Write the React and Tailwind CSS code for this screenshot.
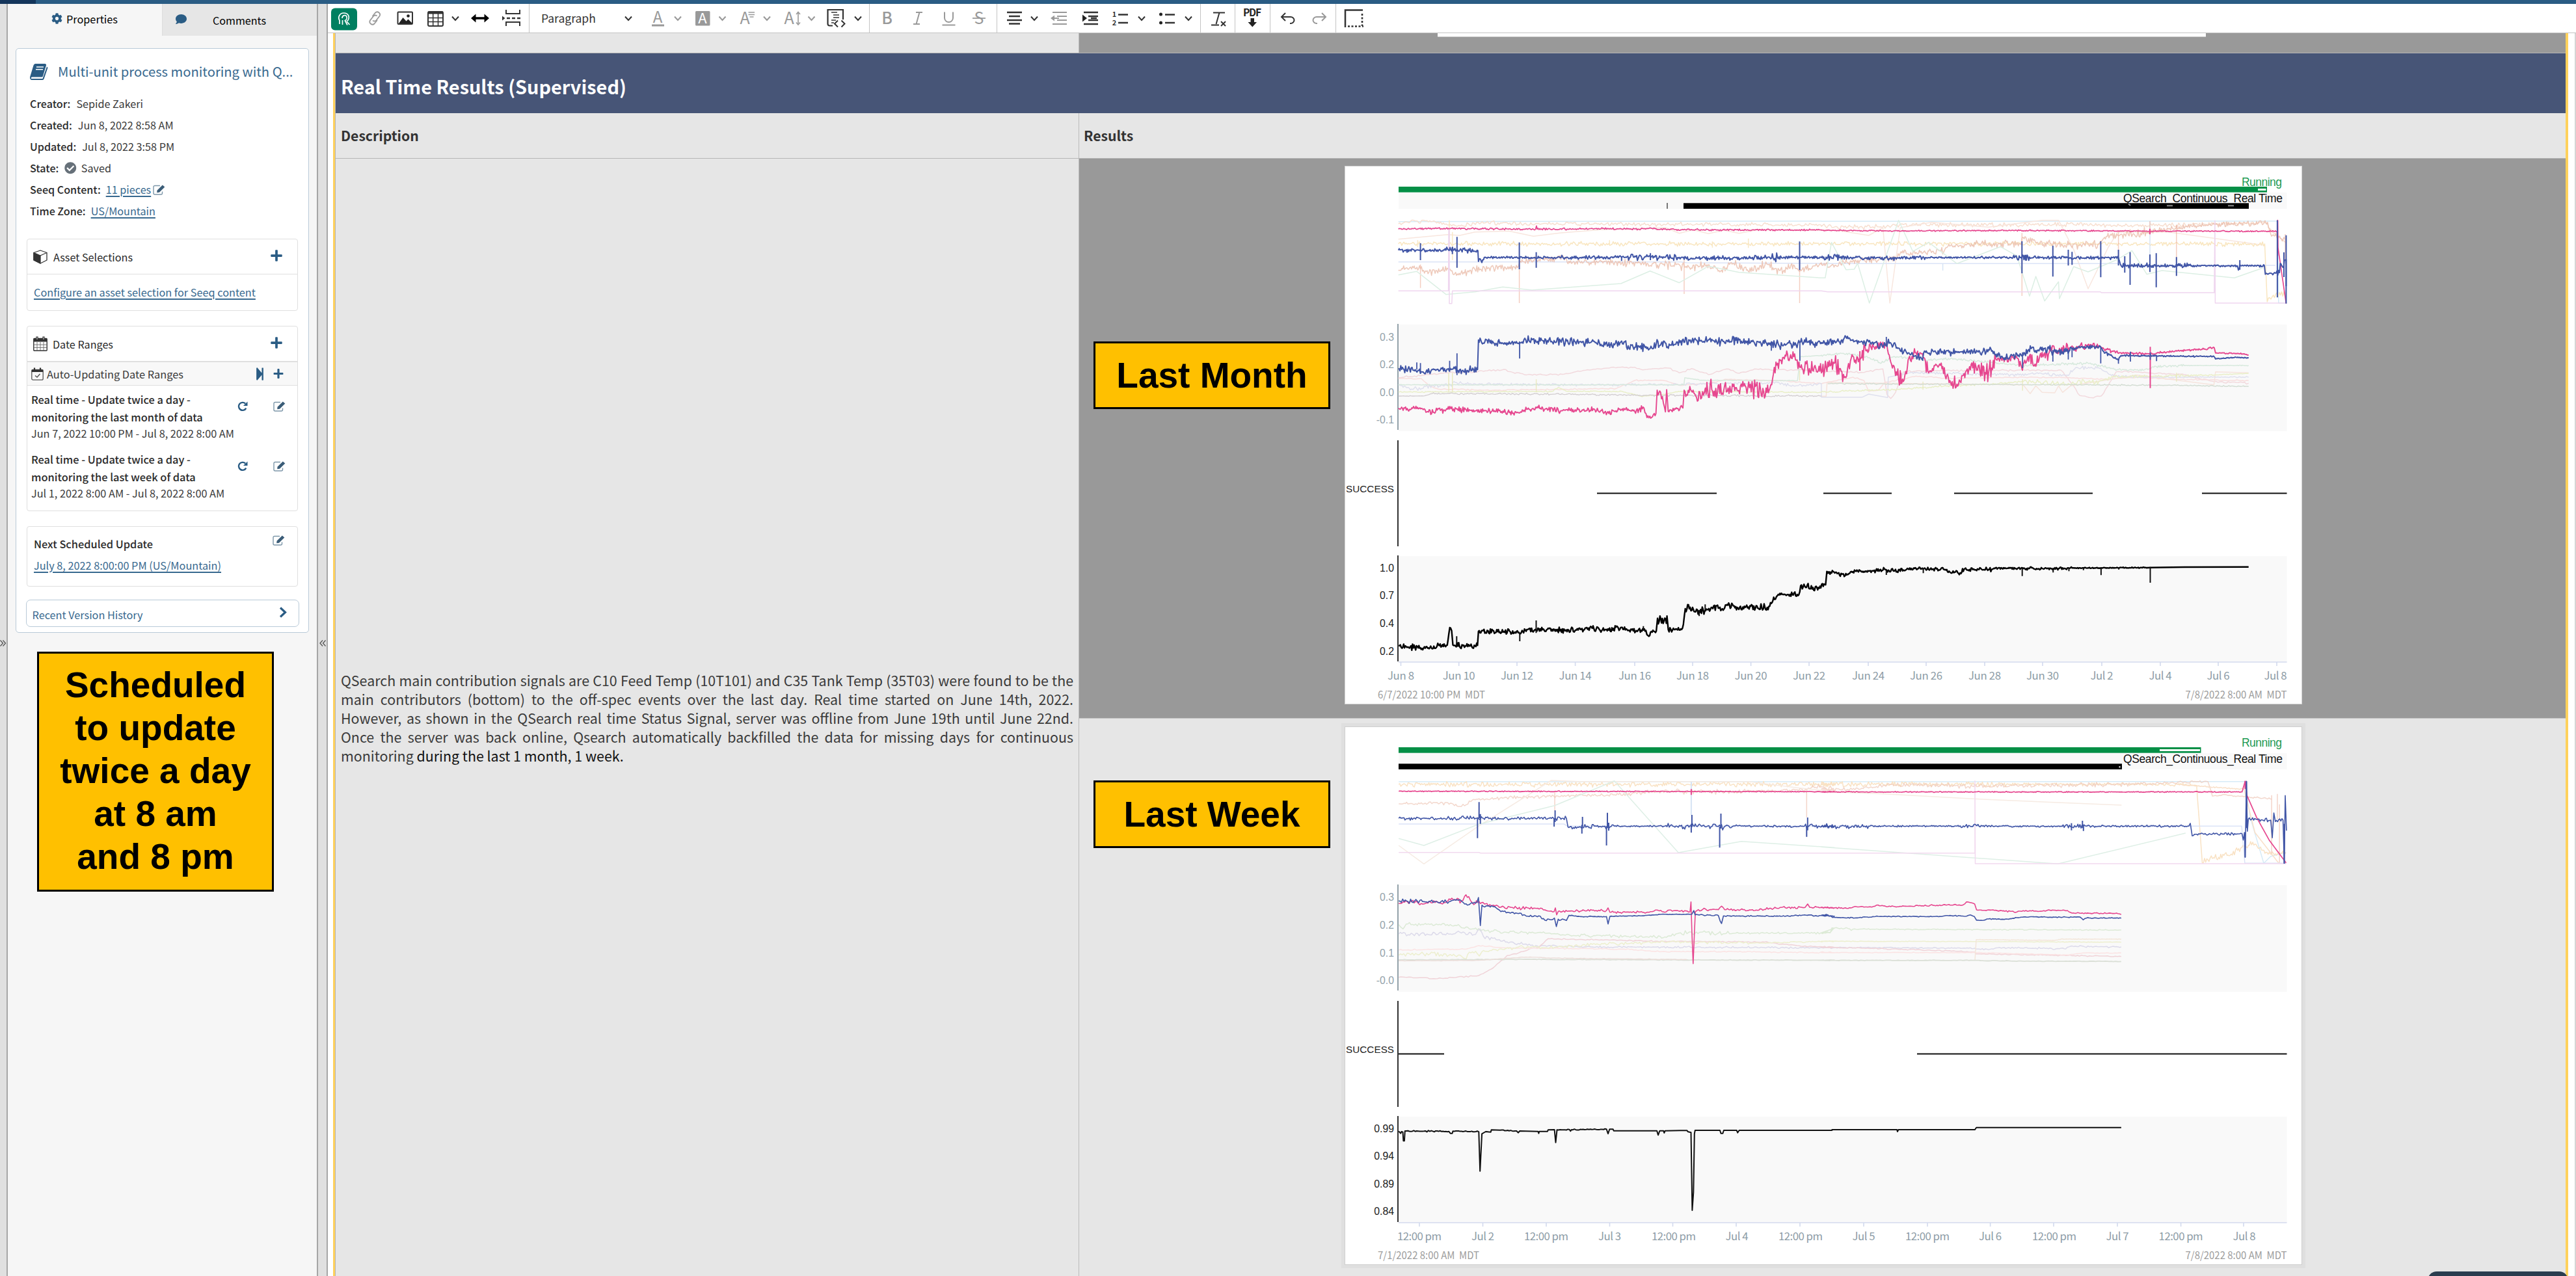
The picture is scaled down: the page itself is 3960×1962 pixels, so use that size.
import React from "react";
import { FaCog, FaComment, FaCheckCircle, FaPlus, FaStepForward } from "react-icons/fa";

/* ---------- trend chart helpers ---------- */

// Each pane maps its own plotting units to chart units: [originX, originY, unitsPerX, unitsPerY].
const PANES = {
  A1: [2060, 240, 2.119, 3],
  B1: [2800, 240, 2.0632, 3],
  C1: [2060, 660, 2.0632, 3],
  D1: [2800, 660, 2.0632, 3],
  A2: [2060, 1100, 2.0632, 3],
  B2: [2800, 1100, 2.0632, 3],
  C2: [2060, 1530, 2.0632, 3],
  D2: [2800, 1530, 1.3517, 3],
};

function rng(seed) {
  let s = seed;
  return () => {
    s = (s * 1664525 + 1013904223) % 4294967296;
    return s / 4294967296;
  };
}

function project(pane, x, y) {
  const [ox, oy, sx, sy] = PANES[pane];
  return [ox + x / sx, oy + y / sy];
}

// Points are [x, y, amplitude?]; the amplitude carries over until it is changed.
function buildPath(data, seed, step) {
  const r = rng(seed);
  const pts = [];
  let amp = 0;
  for (const [pane, list] of data) {
    for (const [x, y, a] of list) {
      if (a !== undefined) amp = a;
      const [px, py] = project(pane, x, y);
      pts.push([px, py, amp / 3]);
    }
  }
  let d = "M" + pts[0][0].toFixed(1) + " " + pts[0][1].toFixed(1);
  for (let i = 1; i < pts.length; i++) {
    const [x0, y0, a0] = pts[i - 1];
    const [x1, y1] = pts[i];
    const n = a0 > 0 ? Math.floor((x1 - x0) / step) : 0;
    for (let k = 1; k < n; k++) {
      const t = k / n;
      const e = (r() + r() - 1) * 1.75 * a0;
      d += "L" + (x0 + (x1 - x0) * t).toFixed(1) + " " + (y0 + (y1 - y0) * t + e).toFixed(1);
    }
    d += "L" + x1.toFixed(1) + " " + y1.toFixed(1);
  }
  return d;
}

function Series({ data, color, width = 1.5, opacity = 1, seed = 7, step = 1.4 }) {
  return <path d={buildPath(data, seed, step)} fill="none" stroke={color} strokeWidth={width} strokeLinejoin="round" opacity={opacity} />;
}

function Spikes({ data, color, width = 2, opacity = 1 }) {
  const d = data
    .flatMap(([pane, list]) =>
      list.map(([x, a, b]) => {
        const [px, p0] = project(pane, x, a);
        const [, p1] = project(pane, x, b);
        return `M${px.toFixed(1)} ${p0.toFixed(1)}V${p1.toFixed(1)}`;
      })
    )
    .join("");
  return <path d={d} fill="none" stroke={color} strokeWidth={width} opacity={opacity} />;
}

const BLUE = "#4055a6";
const PINK = "#e6478f";

function AxisLabels({ labels, color }) {
  return labels.map(([t, y]) => (
    <text key={t} x="2143" y={y + 5.5} textAnchor="end" fontSize="15.8" fill={color} fontFamily="Liberation Sans, sans-serif">{t}</text>
  ));
}

function ChartFrame({ top, dy, greenEnd, greenGap, blackStart, blackEnd, lane2, lane4, ticks, start, startW, end, endW, success, children }) {
  return (
    <svg viewBox={`2068 ${top} 1470 826`} width="1470" height="826" className="block bg-white">
      <g transform={`translate(0 ${dy})`}>
        <rect x="2150" y="296" width="1365.5" height="25" fill="#f9f9f9" />
        <rect x="2150" y="499" width="1365.5" height="164" fill="#f9f9f9" />
        <rect x="2150" y="855" width="1365.5" height="163" fill="#f9f9f9" />
        <rect x="2150" y="287" width={greenEnd - 2150} height="8.7" fill="#048f46" />
        <rect x={greenGap} y="290" width={greenEnd - greenGap - 1.5} height="3" fill="#ffffff" />
        <rect x={blackStart} y="312.3" width={blackEnd - blackStart} height="8.7" fill="#000" />
        <text x="3446" y="286" fontSize="17.5" textLength="62" fill="#1d9a53" fontFamily="Liberation Sans, sans-serif">Running</text>
        <text x="3264" y="311" fontSize="17.5" textLength="245" fill="#111" fontFamily="Liberation Sans, sans-serif">QSearch_Continuous_Real Time</text>
        <path d="M2149 498V661" stroke="#93a2aa" strokeWidth="2" />
        <path d="M2149 677V840M2149 854V1017" stroke="#1c1c1c" strokeWidth="1.8" />
        <path d={success} stroke="#111" strokeWidth="2" />
        <text x="2069" y="756.5" fontSize="15.2" textLength="74" fill="#222" fontFamily="Liberation Sans, sans-serif">SUCCESS</text>
        <AxisLabels labels={lane2} color="#93a2aa" />
        <AxisLabels labels={lane4} color="#222" />
        <path d={"M2150 1018H3515.5" + ticks.map((t) => `M${t[0]} 1018V1024`).join("")} stroke="#d3daee" strokeWidth="1.6" />
        {ticks.map(([x, t, w, c], i) => (
          <text key={i} x={c || x} y="1045" textAnchor="middle" fontSize="16.8" textLength={w} fill="#8d9ca6" fontFamily="Noto Sans CJK SC, sans-serif">{t}</text>
        ))}
        <text x="2118" y="1073.5" fontSize="16" textLength={startW} lengthAdjust="spacingAndGlyphs" fill="#9c9c9c" fontFamily="Noto Sans CJK SC, sans-serif">{start}</text>
        <text x="3515.5" y="1073.5" textAnchor="end" fontSize="16" textLength={endW} lengthAdjust="spacingAndGlyphs" fill="#9c9c9c" fontFamily="Noto Sans CJK SC, sans-serif">{end}</text>
      </g>
      {children}
    </svg>
  );
}

function MonthChart() {
  const ticks = [
    [2153.5, "Jun 8", 41], [2242.7, "Jun 10", 50], [2332, "Jun 12", 50], [2421.6, "Jun 14", 50], [2513, "Jun 16", 50],
    [2602, "Jun 18", 50], [2691.6, "Jun 20", 50], [2781, "Jun 22", 50], [2872, "Jun 24", 50], [2961, "Jun 26", 50],
    [3051, "Jun 28", 50], [3140, "Jun 30", 50], [3231, "Jul 2", 35], [3321, "Jul 4", 35], [3410, "Jul 6", 35], [3500, "Jul 8", 35, 3498],
  ];
  return (
    <ChartFrame
      top={256} dy={0} greenEnd={3485} greenGap={3471} blackStart={2588} blackEnd={3457}
      lane2={[["0.3", 518], ["0.2", 560], ["0.0", 603], ["-0.1", 645]]}
      lane4={[["1.0", 873.5], ["0.7", 915.5], ["0.4", 958.5], ["0.2", 1001]]}
      ticks={ticks} start={"6/7/2022 10:00 PM \u00a0MDT"} startW={165} end={"7/8/2022 8:00 AM \u00a0MDT"} endW={156}
      success="M2455 758.500H2639M2803 758.500H2908M3004 758.500H3217M3385 758.500H3515.500"
    >
      <path d="M2563 312V321" stroke="#333" strokeWidth="1.3" />
      <path d="M3331 316.300H3340M3425 316.300H3434M3272 313.500L3275 316" stroke="#9a9a9a" strokeWidth="1.8" />

      {/* signals, background */}
      <Series color="#d6ebf7" data={[["A1", [[190, 302, 0], [1568, 300]]], ["B1", [[0, 301], [1447, 300], [1450, 678], [1474, 678]]]]} />
      <Series color="#f7dfd0" seed={3} step={2} data={[["A1", [[190, 312, 6], [230, 300], [310, 302], [350, 318], [400, 322], [450, 306], [600, 312], [800, 312], [1000, 316], [1200, 314], [1568, 320]]], ["B1", [[0, 325, 7], [160, 328], [260, 316], [500, 318], [800, 316], [1040, 322], [1100, 318], [1300, 312], [1410, 308], [1430, 350, 0], [1474, 400]]]]} />
      <Series color="#f8e6de" data={[["A1", [[190, 383, 0], [350, 362], [390, 366], [440, 350], [550, 346], [630, 370], [720, 354], [850, 340], [1060, 330], [1105, 356], [1150, 340], [1200, 358], [1250, 342], [1300, 356], [1360, 340], [1568, 342]]], ["B1", [[0, 340], [60, 345], [150, 366], [195, 330], [217, 678], [250, 330], [350, 305], [530, 328], [700, 296], [752, 296], [800, 430], [846, 612], [910, 420], [940, 350], [1100, 350], [1400, 410]]]]} />
      <Series color="#f9e6c0" seed={11} step={1.7} data={[["A1", [[190, 405, 7], [1568, 404]]], ["B1", [[0, 404, 7], [1406, 405, 3], [1414, 672, 12], [1445, 630, 12], [1474, 650]]]]} />
      <Spikes color="#f9e9c6" width={1.5} data={[["A1", [[253, 388, 420], [356, 296, 400], [366, 350, 480], [878, 388, 410], [1213, 394, 422], [1330, 380, 424]]]]} />
      <Series color="#dbe3f7" data={[["A1", [[190, 488, 0], [1110, 488], [1130, 492], [1568, 495]]], ["B1", [[0, 496], [940, 496], [950, 504], [1440, 504]]]]} />
      <Spikes color="#d6e4f4" width={1.5} data={[["B1", [[385, 496, 528], [1042, 300, 460]]]]} />
      <Series color="#ebbfae" opacity={0.85} seed={5} step={1.3} data={[["A1", [[190, 528, 11], [230, 512], [262, 520], [275, 540], [330, 525], [355, 522], [368, 545], [385, 548], [440, 524], [500, 515], [580, 512], [590, 490], [640, 478], [700, 470], [725, 458], [740, 490], [920, 488, 13], [1000, 495], [1040, 505], [1100, 498, 14], [1130, 515], [1190, 505], [1240, 530], [1280, 495], [1330, 532], [1390, 498], [1430, 525], [1480, 505], [1500, 525], [1568, 500]]], ["B1", [[0, 492, 11], [40, 512], [70, 488], [240, 470], [250, 448], [300, 445], [390, 436], [410, 412], [500, 405], [630, 405, 14], [640, 375], [680, 400], [790, 410], [880, 405], [895, 380], [940, 365], [990, 358], [1030, 350, 9], [1140, 330], [1200, 320], [1415, 305], [1425, 360], [1470, 385]]]]} />
      <Spikes color="#efb9a6" width={1.5} opacity={0.7} data={[["A1", [[262, 500, 608], [584, 480, 678], [1121, 480, 636], [1497, 480, 678]]], ["B1", [[636, 355, 645], [942, 345, 470], [1042, 300, 350], [1126, 320, 480], [1471, 360, 480]]]]} />
      <Series color="#dcefe4" data={[["A1", [[190, 548, 0], [250, 532], [345, 638], [440, 626], [530, 604], [625, 618], [915, 588], [1010, 530], [1105, 584], [1200, 508], [1300, 536], [1568, 562]]], ["B1", [[0, 562], [12, 562], [32, 398], [78, 524], [104, 522], [115, 495], [152, 678], [245, 296], [290, 440], [340, 398], [430, 496], [568, 418], [620, 460], [660, 646], [680, 555], [708, 668], [752, 580], [755, 658], [800, 510], [846, 534], [940, 476], [985, 436], [1032, 545], [1080, 528], [1310, 562], [1400, 516]]]]} />
      <Series color="#efd6ef" data={[["A1", [[190, 622, 0], [353, 622], [354, 340], [356, 340], [356, 680], [364, 680], [366, 622], [1568, 622]]], ["B1", [[0, 622], [20, 626], [885, 626], [888, 630], [1246, 630], [1248, 298], [1249, 678], [1474, 678]]]]} />

      {/* signals, foreground */}
      <Series color={PINK} width={1.7} seed={21} data={[["A1", [[190, 337, 3], [300, 334], [620, 337], [637, 337], [640, 322], [642, 337], [850, 335], [995, 337], [1010, 331], [1035, 338], [1200, 340], [1568, 341]]], ["B1", [[0, 342, 2], [170, 345], [700, 343], [1040, 346], [1042, 346], [1446, 347, 0], [1447, 296], [1448, 420], [1474, 680]]]]} />
      <Spikes color={PINK} data={[["B1", [[1042, 335, 361], [1447, 296, 460]]]]} />
      <Series color={BLUE} width={2} seed={31} step={1.2} data={[["A1", [[190, 434, 6], [345, 434, 10], [390, 434, 8], [449, 436, 0], [451, 486, 10], [470, 467, 9], [485, 468, 4], [720, 468, 6], [850, 468, 5], [930, 466, 9], [1100, 468, 6], [1150, 472, 7], [1400, 468, 12], [1425, 468, 5], [1568, 468]]], ["B1", [[0, 468, 10], [60, 469, 6], [200, 469, 10], [240, 469, 6], [330, 468, 3], [500, 468, 9], [512, 468, 4], [600, 468, 9], [680, 468, 5], [942, 470, 2], [950, 504, 8], [1020, 506, 9], [1050, 505, 5], [1130, 506, 9], [1175, 506, 3], [1310, 506, 12], [1330, 506, 4], [1405, 506, 0], [1408, 545, 5], [1442, 540, 14], [1474, 478, 0], [1474, 600]]]]} />
      <Spikes color={BLUE} data={[["A1", [[262, 402, 480], [366, 420, 452], [381, 373, 515], [584, 398, 522], [639, 443, 515], [917, 466, 484], [1011, 448, 480], [1497, 394, 526]]], ["B1", [[636, 393, 541], [648, 455, 482], [734, 413, 556], [783, 432, 505], [795, 442, 502], [886, 393, 559], [942, 432, 505], [962, 462, 538], [979, 443, 594], [1042, 454, 535], [1062, 448, 605], [1126, 466, 553], [1327, 480, 524], [1446, 296, 652], [1467, 444, 558], [1474, 365, 680]]]]} />

      {/* contributions, background */}
      <Series color="#f2d9dd" seed={41} step={3} data={[["A1", [[190, 1022, 3], [340, 1000], [440, 995], [540, 985], [570, 1002], [640, 1010], [730, 1006], [800, 988], [870, 978], [920, 973], [1000, 984], [1070, 978], [1105, 1000], [1145, 980], [1200, 1008], [1260, 982], [1300, 1002], [1350, 982], [1430, 985], [1568, 992]]], ["B1", [[0, 992], [130, 998], [195, 982], [208, 1100], [220, 1118], [235, 1090], [260, 995], [330, 990], [500, 988], [760, 988], [800, 1060], [820, 1105], [850, 1114], [888, 1106], [935, 995], [1000, 996], [1150, 1008], [1245, 1040], [1355, 1048]]]]} />
      <Series color="#f8dede" seed={43} step={3} data={[["A1", [[190, 1027, 2], [265, 1027], [290, 1060], [320, 1075], [500, 1080], [900, 1072], [960, 1035], [1050, 1034], [1110, 1058], [1200, 1048], [1260, 1030], [1440, 1036], [1568, 1050]]], ["B1", [[0, 1050], [15, 1045], [100, 1020], [135, 1035], [150, 1085], [180, 1080], [200, 1045], [300, 1015], [400, 1025], [640, 1020], [780, 1022], [900, 1030], [1000, 1020], [1130, 1030], [1355, 1036]]]]} />
      <Series color="#f6e4dd" seed={44} step={3} data={[["B1", [[0, 1108, 0], [15, 1108], [18, 1045], [640, 1055], [662, 1096], [680, 1060], [700, 1090], [740, 1092], [752, 1060], [765, 1090], [790, 1060], [1000, 1010], [1245, 1055], [1250, 995], [1355, 1000]]]]} />
      <Series color="#dfe0ee" seed={45} step={1.8} data={[["A1", [[190, 1056, 4], [225, 1070, 7], [270, 1072], [300, 1056], [350, 1060, 7], [380, 1045], [420, 1052, 4], [900, 1056], [1240, 1050], [1430, 1045, 5], [1470, 1062], [1568, 1050]]], ["B1", [[0, 1112, 0], [130, 1112], [150, 1098], [210, 1114], [212, 1020], [280, 1000, 5], [520, 1004], [600, 1008], [700, 1004], [780, 1010], [810, 975], [885, 978], [920, 1012], [1000, 1020, 2], [1355, 1020]]]]} />
      <Series color="#d7e9dd" seed={46} data={[["A1", [[190, 1055, 1], [1120, 1055], [1123, 1022], [1180, 1034], [1490, 1036], [1500, 925], [1568, 920]]], ["B1", [[0, 918, 4], [80, 910], [150, 930], [190, 955], [230, 925], [330, 940], [420, 934], [560, 955], [640, 966], [850, 956], [940, 985], [1020, 988], [1060, 970], [1150, 966, 1], [1355, 966]]]]} />
      <Series color="#e9efc8" seed={47} step={1.8} data={[["A1", [[190, 1088, 2], [640, 1086], [690, 1085], [710, 1068], [740, 1085], [920, 1086], [980, 1108], [1050, 1100], [1110, 1085], [1568, 1090]]], ["B1", [[0, 1088, 3], [250, 1076], [400, 1060], [560, 1050], [640, 1040, 8], [760, 1050, 9], [880, 1040], [920, 1018, 4], [1245, 1010, 1], [1355, 1002]]]]} />
      <Spikes color="#e9e9c0" width={1.4} data={[["A1", [[354, 1000, 1088], [366, 1000, 1090], [639, 1030, 1090], [1497, 990, 1036]]], ["B1", [[322, 1040, 1078], [638, 1030, 1082], [1126, 1000, 1040]]]]} />
      <Series color="#d2cdd0" width={1.3} seed={48} step={2} data={[["A1", [[190, 1107, 1], [275, 1106], [300, 1096, 3], [740, 1098], [900, 1102], [1100, 1104], [1568, 1107]]]]} />
      <Series color="#d3ddd3" width={1.5} seed={49} step={2} data={[["B1", [[20, 1050, 2], [700, 1054], [1200, 1058], [1355, 1063]]]]} />

      {/* contributions, foreground */}
      <Series color={PINK} width={1.9} seed={51} step={1.2} data={[["A1", [[190, 1163, 9], [268, 1165], [280, 1182], [340, 1172], [358, 1155], [370, 1167], [500, 1178], [585, 1185], [600, 1172], [640, 1162], [720, 1174], [830, 1170], [870, 1183], [930, 1168], [960, 1178], [990, 1162], [1000, 1206], [1015, 1205], [1029, 1188, 6], [1033, 1080, 26], [1050, 1110, 30], [1060, 1180, 4], [1064, 1078], [1069, 1178, 8], [1090, 1165], [1117, 1162, 14], [1121, 1080, 22], [1150, 1080], [1175, 1120], [1190, 1070, 28], [1250, 1080], [1270, 1062], [1320, 1060], [1345, 1072], [1380, 1090], [1398, 1080, 26], [1420, 950], [1450, 918, 22], [1478, 925], [1500, 975, 26], [1568, 1000, 36]]], ["B1", [[0, 1000, 30], [20, 950], [60, 980, 30], [80, 1015], [92, 945, 26], [120, 935], [140, 895, 18], [165, 878], [205, 870], [220, 950], [240, 1010, 30], [260, 1040], [275, 940, 20], [305, 900], [325, 930], [340, 1000], [380, 955], [405, 1045], [440, 1040], [460, 990], [490, 970, 30], [530, 1000], [555, 940, 12], [620, 930, 22], [635, 975], [655, 925, 26], [680, 970], [695, 910], [740, 900, 18], [790, 882, 12], [880, 876, 6], [895, 888], [940, 908, 3], [1040, 912], [1130, 898], [1200, 892], [1246, 884, 2], [1250, 908], [1320, 910], [1355, 917]]]]} />
      <Spikes color={PINK} data={[["B1", [[1043, 880, 1070], [252, 1000, 1052], [122, 900, 990]]]]} />
      <Series color={BLUE} width={2} seed={61} step={1.2} data={[["A1", [[190, 980, 11], [245, 985], [270, 995], [340, 980, 13], [400, 988], [448, 985, 0], [451, 848, 12], [520, 864, 6], [590, 862, 10], [605, 848, 14], [670, 846], [700, 858], [820, 855], [850, 868], [920, 866], [960, 882], [1010, 888], [1030, 866], [1080, 872], [1110, 852], [1190, 850], [1240, 856], [1300, 848], [1350, 862], [1400, 862], [1440, 872], [1480, 872], [1500, 858], [1568, 864]]], ["B1", [[0, 860, 11], [55, 856], [85, 842], [120, 858], [175, 855], [185, 885], [210, 860], [235, 870], [250, 898], [300, 920], [318, 935], [330, 905], [540, 900, 10], [570, 925], [640, 918, 13], [665, 888], [750, 898], [800, 895], [815, 880, 6], [885, 880, 5], [900, 908], [942, 942], [950, 920, 2.5], [1060, 922], [1245, 924, 1.5], [1250, 936], [1320, 928], [1355, 932]]]]} />
      <Spikes color={BLUE} width={1.8} data={[["A1", [[250, 952, 985], [262, 955, 1005], [357, 944, 995], [381, 910, 1010], [585, 862, 934], [1405, 862, 898], [1498, 860, 944]]], ["B1", [[206, 834, 870], [638, 905, 978], [734, 895, 948], [783, 895, 938], [795, 890, 928], [886, 880, 956], [942, 940, 958], [980, 902, 948], [1043, 905, 940], [1063, 922, 946]]]]} />

      {/* model score */}
      <Series color="#000" width={2.4} seed={71} step={1.2} data={[["C1", [[186, 998, 9], [215, 1004], [270, 1010], [300, 1010], [315, 998, 7], [340, 996, 5], [345, 945], [348, 915, 12], [354, 930, 4], [358, 995, 9], [400, 1000], [436, 997, 2], [439, 932, 9], [540, 934], [570, 943], [595, 924], [750, 926], [800, 918], [840, 924], [890, 915], [930, 930], [970, 928], [977, 952], [990, 936], [1003, 932, 8], [1007, 872, 20], [1035, 895, 8], [1037, 862], [1041, 925, 9], [1060, 924], [1086, 918, 12], [1095, 828], [1118, 822], [1128, 842, 11], [1175, 830], [1185, 815], [1215, 835], [1230, 812], [1260, 822, 12], [1355, 822], [1378, 785, 12], [1390, 762, 9], [1455, 764, 10], [1461, 722, 11], [1500, 730], [1540, 718, 3], [1544, 656, 8], [1556, 660, 0]]], ["D1", [[17, 658, 8], [55, 662, 10], [80, 672, 8], [95, 656, 6], [195, 650, 7], [250, 655, 8], [275, 644, 5], [330, 644, 6], [390, 648, 8], [410, 662, 9], [445, 660], [460, 648, 7], [540, 647, 5], [560, 641, 3], [640, 643, 5], [730, 643, 4], [800, 640, 1.5], [1040, 638, 0], [1150, 636], [1355, 635]]]]} />
      <Spikes color="#111" width={2} data={[["C1", [[622, 882, 940], [570, 940, 978], [370, 955, 1000], [962, 908, 930], [1139, 835, 862], [1158, 808, 840]]], ["D1", [[206, 650, 672], [323, 642, 664], [637, 642, 677], [735, 642, 661], [785, 640, 655], [831, 638, 650], [887, 636, 673], [943, 636, 647], [1043, 635, 708]]]]} />
    </ChartFrame>
  );
}

function WeekChart() {
  const ticks = [
    [2182, "12:00 pm", 68], [2279.5, "Jul 2", 35], [2377, "12:00 pm", 68], [2474.5, "Jul 3", 35], [2571.5, "12:00 pm", 68, 2573], [2669, "Jul 4", 35, 2670],
    [2767, "12:00 pm", 68, 2768], [2865, "Jul 5", 35], [2963, "12:00 pm", 68], [3059.6, "Jul 6", 35], [3157, "12:00 pm", 68, 3158], [3255, "Jul 7", 35], [3352.6, "12:00 pm", 68], [3449, "Jul 8", 35, 3450],
  ];
  return (
    <ChartFrame
      top={1118} dy={862} greenEnd={3383.5} greenGap={3320} blackStart={2150} blackEnd={3262}
      lane2={[["0.3", 517], ["0.2", 560], ["0.1", 603], ["-0.0", 645]]}
      lane4={[["0.99", 873.5], ["0.94", 915.5], ["0.89", 958.5], ["0.84", 1000.5]]}
      ticks={ticks} start={"7/1/2022 8:00 AM \u00a0MDT"} startW={156} end={"7/8/2022 8:00 AM \u00a0MDT"} endW={156}
      success="M2150 758.500H2220M2947 758.500H3515.500"
    >
      <path d="M3258.500 1178V1180.500" stroke="#ddd" strokeWidth="2" />

      {/* signals, background */}
      <Series color="#d6ebf7" data={[["A2", [[186, 306, 0], [1568, 306]]], ["B2", [[0, 306], [1342, 305], [1360, 470], [1403, 682], [1425, 650], [1474, 632]]]]} />
      <Series color="#f9e2c4" seed={3} step={1.6} data={[["A2", [[186, 318, 8], [1568, 318]]], ["B2", [[0, 318, 8], [600, 318, 5], [1130, 318, 4], [1190, 325, 2], [1208, 680, 10], [1240, 660], [1300, 640], [1330, 612], [1368, 585, 10], [1400, 622], [1440, 638], [1474, 635]]]]} />
      <Series color="#efc9bb" opacity={0.75} seed={5} step={2} data={[["A2", [[186, 408, 5], [350, 405], [380, 420], [400, 412], [420, 390], [470, 388], [520, 380], [640, 375], [720, 370], [850, 368, 7], [950, 355], [1040, 350, 10], [1200, 352, 6], [1300, 348], [1480, 345], [1500, 325, 12], [1530, 330], [1568, 345]]], ["B2", [[0, 340, 7], [80, 343], [150, 335], [200, 322], [420, 322, 8], [500, 325], [980, 318, 5], [1180, 306, 3], [1226, 306], [1240, 372], [1280, 365], [1340, 375], [1428, 386]]]]} />
      <Spikes color="#efc3b4" width={1.5} opacity={0.7} data={[["A2", [[681, 350, 440], [1480, 350, 470]]], ["B2", [[1428, 368, 640], [1446, 362, 480], [1453, 410, 682]]]]} />
      <Series color="#f6ebe3" data={[["A2", [[186, 600, 0], [266, 685], [440, 510], [670, 300], [760, 305], [1300, 306], [1450, 334], [1568, 352]]], ["B2", [[0, 352], [200, 362], [480, 385], [750, 402], [952, 414]]]]} />
      <Series color="#f9e0c9" data={[["B2", [[1130, 318, 2], [1250, 332], [1340, 340], [1375, 540, 0], [1452, 685]]]]} />
      <Series color="#dbe3f7" data={[["A2", [[186, 501, 0], [710, 501], [722, 511], [1568, 511]]], ["B2", [[0, 511], [1333, 511], [1343, 682], [1474, 682]]]]} />
      <Spikes color="#d6e4f4" width={2} data={[["A2", [[1114, 306, 460]]]]} />
      <Series color="#deefe6" data={[["A2", [[186, 568, 0], [266, 600], [440, 502], [680, 416], [870, 302], [1073, 633], [1273, 581], [1568, 610]]], ["B2", [[0, 607], [750, 685], [1155, 543]]]]} />
      <Series color="#f2d9ef" data={[["A2", [[186, 632, 0], [440, 632], [446, 635], [1568, 635]]], ["B2", [[0, 635], [487, 635], [487, 302], [488, 684], [1474, 684]]]]} />

      {/* signals, foreground */}
      <Series color={PINK} width={1.7} seed={21} data={[["A2", [[186, 350, 1.5], [1110, 351], [1112, 351], [1568, 352]]], ["B2", [[0, 353, 1.5], [1334, 353, 0], [1344, 304], [1350, 370], [1380, 470], [1420, 575], [1474, 680]]]]} />
      <Spikes color={PINK} data={[["A2", [[1114, 340, 367]]], ["B2", [[1344, 302, 340]]]]} />
      <Series color={BLUE} width={1.6} seed={31} step={1.6} data={[["A2", [[186, 475, 5], [340, 475, 8], [430, 475, 10], [455, 475, 5], [660, 475, 7], [718, 475, 0], [723, 515, 7], [840, 511, 8], [870, 511, 2.5], [1030, 511, 10], [1055, 511, 4], [1080, 511, 10], [1130, 511, 7], [1200, 512, 10], [1220, 512, 5], [1280, 511, 3], [1470, 512, 10], [1500, 511, 6], [1568, 512]]], ["B2", [[0, 512, 8], [150, 511, 2.5], [430, 511, 6], [500, 511, 3], [760, 511, 8], [840, 511, 3.5], [1165, 511, 0], [1170, 498], [1176, 556, 5], [1190, 548, 4], [1334, 546, 0], [1338, 575], [1342, 540], [1344, 655], [1348, 304], [1351, 535], [1354, 478, 7], [1425, 483, 0], [1430, 565], [1435, 450], [1440, 490, 8], [1464, 483, 0], [1468, 682], [1471, 370], [1475, 532]]]]} />
      <Spikes color={BLUE} width={2} data={[["A2", [[436, 475, 566], [441, 400, 475], [445, 455, 500], [679, 475, 513], [682, 438, 492], [767, 505, 545], [769, 468, 515], [845, 511, 600], [848, 449, 520], [852, 495, 532], [1114, 500, 541], [1116, 459, 515], [1204, 512, 610], [1208, 453, 522], [1480, 510, 560], [1483, 471, 530]]], ["B2", [[793, 497, 530], [828, 486, 520], [831, 505, 533], [1344, 540, 655], [1348, 304, 520], [1468, 500, 684]]]]} />

      {/* contributions, background */}
      <Series color="#dcead6" seed={41} step={2.4} data={[["A2", [[186, 965, 5], [200, 985], [210, 962], [350, 965], [380, 972], [410, 985], [450, 990], [520, 1000], [640, 1003], [730, 1015], [900, 1018], [980, 1024, 7], [1040, 1018], [1080, 1003], [1250, 1005, 3], [1555, 1003], [1560, 980], [1568, 982]]], ["B2", [[0, 1003, 3], [30, 998], [42, 980, 4], [100, 986, 1.5], [951, 990]]]]} />
      <Series color="#dcdaea" seed={42} step={2.4} data={[["A2", [[186, 1008, 6], [360, 1008], [380, 1000], [430, 1010], [444, 985], [455, 1020], [500, 1036], [550, 1048], [620, 1062, 3], [800, 1068], [1568, 1072]]], ["B2", [[0, 1070, 2], [487, 1074, 2], [490, 1078], [545, 1078, 3], [560, 1072], [770, 1076], [790, 1065], [951, 1068]]]]} />
      <Series color="#f0d3d8" seed={43} step={3} data={[["A2", [[186, 1208, 2], [265, 1210], [290, 1215], [360, 1210], [440, 1200], [480, 1170], [530, 1108], [560, 1100], [600, 1078], [630, 1070], [660, 1030], [860, 1036], [1000, 1042], [1340, 1045], [1450, 1062], [1568, 1070]]], ["B2", [[0, 1070, 2], [160, 1074], [400, 1086], [487, 1092], [490, 1100], [800, 1108], [951, 1112]]]]} />
      <Series color="#fbe3e3" seed={44} step={3} data={[["A2", [[186, 1082, 2], [400, 1078], [440, 1062], [520, 1072], [900, 1078], [1020, 1090], [1250, 1090], [1568, 1094]]], ["B2", [[0, 1094, 1], [487, 1094], [780, 1105], [830, 1096], [951, 1096]]]]} />
      <Series color="#edefcf" seed={45} step={2.4} data={[["A2", [[186, 1106, 7], [240, 1098], [350, 1103], [395, 1122], [415, 1095, 5], [430, 1088], [442, 1110], [450, 1090], [560, 1070], [680, 1070], [800, 1056, 5], [1040, 1045], [1300, 1050, 2], [1568, 1042]]], ["B2", [[0, 1042, 1], [487, 1043], [951, 1046]]]]} />
      <Series color="#f3e6da" data={[["B2", [[487, 1130, 0], [491, 1034, 1], [740, 1038], [760, 1032], [951, 1032]]]]} />
      <Series color="#dadfd6" width={1.8} seed={46} step={3} data={[["A2", [[186, 1128, 1], [600, 1125], [1100, 1128], [1568, 1129]]], ["B2", [[0, 1130, 1], [480, 1130], [600, 1133], [951, 1135]]]]} />
      <Series color="#ecdcd8" width={1.3} seed={47} step={3} data={[["A2", [[186, 1132, 1], [440, 1130], [590, 1115], [700, 1120], [1100, 1126]]]]} />

      {/* contributions, foreground */}
      <Series color={PINK} width={1.6} seed={51} step={2} data={[["A2", [[186, 868, 8], [200, 860], [240, 858], [270, 868], [310, 862], [325, 870], [350, 850], [385, 855], [395, 835], [408, 836], [420, 865], [445, 868, 5], [500, 878], [520, 884], [560, 888], [640, 890], [660, 902, 3], [679, 905], [683, 888], [687, 920], [692, 904, 4], [845, 900], [850, 888], [856, 908], [980, 908], [1000, 898, 3], [1030, 908], [1045, 898], [1110, 906], [1113, 860, 0], [1116, 1000], [1120, 1145], [1124, 1000], [1127, 905, 4], [1150, 895], [1200, 896], [1210, 880], [1220, 896], [1320, 898], [1400, 886], [1475, 886], [1483, 870], [1490, 886], [1568, 888]]], ["B2", [[0, 886, 2], [85, 890], [110, 882], [160, 884], [175, 875], [220, 882], [400, 874], [450, 874], [460, 860], [475, 864], [486, 870], [492, 897], [540, 898], [620, 907], [640, 901], [700, 903], [720, 897], [780, 900], [795, 912], [940, 914], [951, 918]]]]} />
      <Series color={BLUE} width={1.6} seed={61} step={2} data={[["A2", [[186, 856, 7], [350, 858, 8], [380, 850], [395, 870], [430, 866], [439, 840, 0], [445, 970], [450, 875, 7], [490, 882], [510, 905, 4], [570, 912], [600, 928], [630, 925], [650, 945], [680, 935], [686, 974, 0], [692, 940, 5], [718, 946], [726, 922, 1.5], [760, 928], [845, 928], [850, 962, 0], [856, 927, 1], [960, 924], [1020, 917], [1110, 918, 8], [1122, 900], [1126, 920, 2], [1200, 923], [1206, 950], [1210, 960], [1216, 925], [1390, 926], [1478, 922], [1568, 926]]], ["B2", [[0, 922, 1.5], [20, 920], [35, 932], [110, 934], [180, 927], [380, 928], [395, 923], [460, 926], [472, 920], [485, 928], [492, 945], [515, 945], [530, 939], [590, 940], [620, 933], [660, 929], [740, 931], [820, 930], [830, 943], [840, 935], [951, 935]]]]} />

      {/* model score */}
      <Series color="#111" width={2} seed={71} step={2.2} data={[["C2", [[186, 628, 0], [192, 638], [195, 630], [199, 632], [201, 673], [204, 673], [206, 627, 2], [345, 629, 0], [350, 638], [356, 638], [358, 628, 2], [440, 631, 0], [444, 812], [450, 640], [462, 630], [478, 632], [480, 622], [508, 623, 1.5], [560, 627, 0], [565, 635], [570, 627], [628, 629], [630, 638], [632, 629], [658, 629], [660, 622], [680, 621], [684, 680], [688, 622, 1.5], [728, 621], [731, 628], [734, 621], [845, 619, 0], [850, 640], [855, 619], [866, 619], [868, 626], [1005, 626], [1009, 646], [1014, 626], [1026, 626], [1028, 636], [1031, 626], [1080, 625], [1100, 625], [1104, 631], [1113, 634], [1117, 993], [1121, 910], [1124, 640], [1126, 624], [1205, 624], [1208, 638], [1214, 638], [1217, 624], [1258, 624], [1261, 635], [1266, 624], [1560, 624], [1563, 621], [1568, 621]]], ["D2", [[22, 621], [157, 621], [158, 630], [160, 621], [319, 621], [322, 611], [623, 611]]]]} />
    </ChartFrame>
  );
}

/* ---------- editor toolbar ---------- */

function Cell({ x, w, children }) {
  return (
    <svg viewBox={`${x} 6 ${w} 44`} width={w} height="44" className="block shrink-0" fill="none" stroke="#333" strokeWidth="2">
      {children}
    </svg>
  );
}

const Chev = ({ x, gray }) => <path d={`M${x - 5} 25.5L${x} 31L${x + 5} 25.5`} stroke={gray ? "#999" : "#333"} strokeWidth="2" />;
const Glyph = ({ x, y, s, fill = "#999", children, ...p }) => (
  <text x={x} y={y} fontSize={s} fill={fill} stroke="none" textAnchor="middle" fontFamily="Noto Sans CJK SC, sans-serif" {...p}>{children}</text>
);
const Sep = () => <div className="h-[44px] w-px shrink-0 bg-[#c4c4c4]" />;

function Toolbar() {
  return (
    <div className="flex h-[45px] shrink-0 items-start border-b border-[#c4c4c4] bg-white">
      <Cell x={504} w={56}>
        <rect x="509" y="12.5" width="40" height="34" rx="6" fill="#007f60" stroke="none" />
        <path d="M522 37v-5.500c-3-5 0-11.500 6.500-11.500 7 0 9.500 6 6.500 11l-2 2M526.500 38v-7M530 31l4 7.500M533 33l4.500 5M526 28c0-5 6-6 7-2s-2 5-2 5" stroke="#fff" strokeWidth="1.700" />
      </Cell>
      <Cell x={560} w={32}>
        <g stroke="#999" strokeWidth="1.800" strokeLinecap="round">
          <path d="M573 24.500l4-5a4.200 4.200 0 0 1 6.600 5l-5 6.500a4.200 4.200 0 0 1-5 1" />
          <path d="M579.500 31.500l-4 5a4.200 4.200 0 0 1-6.600-5l5-6.500a4.200 4.200 0 0 1 5-1" />
        </g>
      </Cell>
      <Cell x={592} w={54}>
        <rect x="611.500" y="18.500" width="22.500" height="18.500" rx="1" />
        <path d="M613 36l6.500-9 5 5.500 3-3 5.500 5.500v1z" fill="#222" stroke="none" />
        <circle cx="627.500" cy="24.500" r="2.300" fill="#222" stroke="none" />
      </Cell>
      <Cell x={646} w={66}>
        <rect x="658" y="18" width="23" height="22" rx="2" />
        <path d="M658 19.500H681" strokeWidth="4" />
        <path d="M658 27.500H681M658 33.500H681M665.700 20V40M673.500 20V40" strokeWidth="1.500" />
        <Chev x={700} />
      </Cell>
      <Cell x={712} w={50}>
        <path d="M729 28H747" stroke="#000" strokeWidth="3.500" />
        <path d="M724 28l7.500-6.500v13zM752 28l-7.500-6.500v13z" fill="#000" stroke="none" />
      </Cell>
      <Cell x={762} w={51}>
        <path d="M778 15v6H799v-6M778 40v-6H799v6" strokeWidth="2" />
        <path d="M779 28h5M787 28h5M795 28h5" strokeWidth="2.500" />
        <path d="M772 24.500l4.500 3.500-4.500 3.500z" fill="#333" stroke="none" />
      </Cell>
      <Sep />
      <div className="flex h-[44px] w-[128px] shrink-0 items-center pl-[18px]">
        <span className="whitespace-nowrap text-[17.500px] leading-[24px] text-[#333]">Paragraph</span>
      </div>
      <Cell x={942} w={50}><Chev x={966} /></Cell>
      <Cell x={992} w={66}>
        <Glyph x={1011} y={35} s={24}>A</Glyph>
        <path d="M1002 39H1021" stroke="#999" strokeWidth="3" />
        <Chev x={1042} gray />
      </Cell>
      <Cell x={1058} w={68}>
        <rect x="1069" y="17" width="22.500" height="22.500" rx="1.500" fill="#999" stroke="none" />
        <Glyph x={1080} y={36} s={22} fill="#fff">A</Glyph>
        <Chev x={1110.5} gray />
      </Cell>
      <Cell x={1126} w={68}>
        <Glyph x={1145} y={37} s={25}>A</Glyph>
        <path d="M1150.500 19h9.500M1150.500 22.500h9.500M1152.500 26h6" stroke="#999" strokeWidth="1.600" />
        <Chev x={1179} gray />
      </Cell>
      <Cell x={1194} w={68}>
        <Glyph x={1213} y={37} s={25}>A</Glyph>
        <path d="M1227 20V36M1224 22l3-3.500 3 3.500M1224 34.500l3 3.500 3-3.500" stroke="#999" strokeWidth="1.600" />
        <Chev x={1247.5} gray />
      </Cell>
      <Cell x={1262} w={74}>
        <path d="M1280 39.500H1275.500a3 3 0 0 1-3-3V15H1296V30" strokeWidth="2.200" />
        <path d="M1278 19h9M1281 23h9M1281 27h9M1278 31h7M1278 35h4" strokeWidth="1.500" />
        <path d="M1288 31.500l-5 5 5 5M1293.500 31.500l5 5-5 5" strokeWidth="2" />
        <Chev x={1319} />
      </Cell>
      <Sep />
      <Cell x={1337} w={53}><Glyph x={1363.5} y={37} s={25} fontWeight="500">B</Glyph></Cell>
      <Cell x={1390} w={44}><path d="M1408 19H1418M1404 37H1414M1413.500 19L1408.500 37" stroke="#999" strokeWidth="2" /></Cell>
      <Cell x={1434} w={48}><path d="M1452 18.500v9a6.500 6.500 0 0 0 13 0v-9M1448.500 38.500H1468.500" stroke="#999" strokeWidth="2" /></Cell>
      <Cell x={1482} w={50}><Glyph x={1505} y={37} s={25}>S</Glyph><path d="M1495 28H1515" stroke="#999" strokeWidth="1.800" /></Cell>
      <Sep />
      <Cell x={1533} w={68}>
        <path d="M1548 19H1571M1551 25H1568M1548 31H1571M1551 36.500H1568" strokeWidth="2.300" />
        <Chev x={1590} />
      </Cell>
      <Cell x={1601} w={50}>
        <path d="M1618 19H1640M1625 25H1640M1625 31H1640M1618 37H1640M1617 28H1628" stroke="#999" strokeWidth="2.200" />
        <path d="M1621 23.500v9l-6-4.500z" fill="#999" stroke="none" />
      </Cell>
      <Cell x={1651} w={50}>
        <path d="M1666 19H1688M1673 25H1688M1673 31H1688M1666 37H1688M1677 28H1686" strokeWidth="2.300" />
        <path d="M1664 22.500v11l7-5.500z" fill="#222" stroke="none" />
      </Cell>
      <Cell x={1701} w={68}>
        <path d="M1719 22.500H1734M1719 35H1734" strokeWidth="2.500" />
        <Glyph x={1713} y={25.5} s={11} fill="#333" fontWeight="700">1</Glyph>
        <Glyph x={1713} y={38.5} s={11} fill="#333" fontWeight="700">2</Glyph>
        <Chev x={1755} />
      </Cell>
      <Cell x={1769} w={76}>
        <path d="M1791 22.500H1806M1791 35H1806" strokeWidth="2.500" />
        <circle cx="1784.500" cy="22" r="2.500" fill="#222" stroke="none" />
        <circle cx="1784.500" cy="35" r="2.500" fill="#222" stroke="none" />
        <Chev x={1827} />
      </Cell>
      <Sep />
      <Cell x={1846} w={52}>
        <path d="M1865 19.500H1883M1874.500 19.500L1869.500 37M1862 38.500H1874M1877 33l7 7M1884 33l-7 7" strokeWidth="2" />
      </Cell>
      <Sep />
      <Cell x={1899} w={53}>
        <Glyph x={1925} y={25} s={15.5} fill="#222" fontWeight="700" textLength="28">PDF</Glyph>
        <path d="M1922.500 28h5.500v6h4l-6.700 7.500-6.800-7.500h4z" fill="#222" stroke="none" />
      </Cell>
      <Sep />
      <Cell x={1953} w={50}>
        <path d="M1976 20l-6 6 6 6M1970.500 26H1984a5.500 5 0 0 1 0 10h-1" />
      </Cell>
      <Cell x={2003} w={50}>
        <path d="M2032 20l6 6-6 6M2037.500 26H2024a5.500 5 0 0 0 0 10h1" stroke="#999" />
      </Cell>
      <Sep />
      <Cell x={2054} w={60}>
        <path d="M2068 42V15.500H2095" strokeWidth="2.500" />
        <path d="M2094 21V40M2072 40.500H2096" strokeWidth="2.600" strokeDasharray="3 2.500" />
      </Cell>
    </div>
  );
}

/* ---------- sidebar ---------- */

function EditIcon({ className = "" }) {
  return (
    <svg viewBox="0 0 19 16" className={"h-[16px] w-[19px] " + className} fill="none">
      <path d="M11 1.500H3a2 2 0 0 0-2 2v9.500a2 2 0 0 0 2 2h9.500a2 2 0 0 0 2-2V10.500" stroke="#7d97a9" strokeWidth="1.400" />
      <path d="M6.500 8.800L14.800 .5 18.300 3.500 10 11.700 6.200 12.200z" fill="#3b5d78" />
    </svg>
  );
}

function Redo() {
  return (
    <svg viewBox="0 0 16 16" className="h-[16px] w-[16px]" fill="none">
      <path d="M13.300 10.600A6 6 0 1 1 12.200 3.600" stroke="#2a5c84" strokeWidth="2.400" />
      <path d="M15.500 .5V7H9z" fill="#2a5c84" />
    </svg>
  );
}

function Calendar() {
  return (
    <svg viewBox="0 0 22 23" className="h-[23px] w-[22px] shrink-0" fill="none">
      <rect x=".8" y="3.500" width="20.400" height="18.700" rx="1" stroke="#333" strokeWidth="1.400" />
      <path d="M1 3.500H21V8.500H1z" fill="#333" />
      <path d="M6 .5v5M16 .5v5" stroke="#333" strokeWidth="3.200" />
      <path d="M6 1.500v3.500M16 1.500v3.500" stroke="#bbb" strokeWidth="1.200" />
      <path d="M1 13h20M1 17.500h20M6 9v13M11 9v13M16 9v13" stroke="#777" strokeWidth="1" />
    </svg>
  );
}

function CalendarCheck() {
  return (
    <svg viewBox="0 0 19 20" className="h-[20px] w-[19px] shrink-0" fill="none">
      <rect x=".8" y="3.500" width="17.400" height="15.700" rx="2" stroke="#555" strokeWidth="1.300" />
      <path d="M.8 3.500H18.200V7H.8z" fill="#333" />
      <path d="M5 .5v4.500M14 .5v4.500" stroke="#333" strokeWidth="2.200" />
      <path d="M6 12.500l3 2.500 4.500-5" stroke="#555" strokeWidth="1.500" />
    </svg>
  );
}

function Box3D() {
  return (
    <svg viewBox="0 0 22 22" className="h-[22px] w-[22px] shrink-0" fill="none" stroke="#333" strokeWidth="1.300" strokeLinejoin="round">
      <path d="M11 1L21 4.500V16L11 21 1 16V4.500z" fill="#fff" />
      <path d="M1 4.500L11 9V21L1 16z" fill="#333" />
      <path d="M11 9L21 4.500" />
    </svg>
  );
}

const link = "text-[#38698f] underline underline-offset-[3px] decoration-[1.5px]";

function Prop({ label, children }) {
  return (
    <div className="flex items-center whitespace-nowrap">
      <span className="text-[16.1px] font-medium text-[#2a2a2a]">{label}</span>
      {children}
    </div>
  );
}

function RangeItem({ a, b, c, className }) {
  return (
    <div className={"flex h-[92px] pl-[6px] " + className}>
      <div className="w-[317px] shrink-0 whitespace-nowrap text-[#2a2a2a]">
        <p className="text-[16.4px] font-medium leading-[26.500px]">{a}</p>
        <p className="text-[16.4px] font-medium leading-[26.500px]">{b}</p>
        <p className="text-[16.270px] leading-[24px] text-[#3a3a3a]">{c}</p>
      </div>
      <div className="mt-[16px]"><Redo /></div>
      <EditIcon className="ml-[39px] mt-[16px]" />
    </div>
  );
}

function Sidebar() {
  return (
    <div className="flex w-[475px] shrink-0 flex-col bg-[#f6f6f6]">
      <div className="flex h-[49px]">
        <div className="flex w-[237px] items-start pl-[67px] pt-[12px]">
          <FaCog className="mt-[2px] h-[17px] w-[17px] text-[#2a5c84]" />
          <span className="ml-[6px] text-[16.280px] leading-[22px] text-black">Properties</span>
        </div>
        <div className="flex w-[238px] items-start border-l border-[#dcdcdc] bg-[#e6e6e6] pl-[18px] pt-[14px]">
          <FaComment className="mt-px h-[17px] w-[21px] text-[#2a5c84]" />
          <span className="ml-[38px] text-[16.100px] leading-[22px] text-black">Comments</span>
        </div>
      </div>
      <div className="ml-[12px] mt-[19px] h-[899px] w-[451px] rounded-[5px] border-[1.500px] border-[#b9cad8] bg-white px-[16px] pt-[17px]">
        <div className="flex h-[36px] items-center pl-[5px]">
          <svg viewBox="0 0 28 27" className="h-[27px] w-[28px] shrink-0">
            <path d="M8 1H23a2 2 0 0 1 2 2.500L20 20a2 2 0 0 1-2 1.500H3.500c-2 0-2.500 2.500-.5 2.500H19.500L26 5.500 27.500 7 21.500 24.500a2.500 2.500 0 0 1-2 1.500H3C0 26-.5 22 .5 20L5.500 3.500A3.500 3.500 0 0 1 8 1z" fill="#2a5c84" />
            <path d="M10 6H21M9 9.800H20" stroke="#fff" strokeWidth="1.600" />
          </svg>
          <span className="ml-[15px] whitespace-nowrap text-[20.200px] leading-[30px] text-[#38698f]">Multi-unit process monitoring with Q...</span>
        </div>
        <div className="mt-[15px] flex flex-col pl-[5px] text-[16.200px] leading-[33px] text-[#3a3a3a]">
          <Prop label="Creator:"><span className="ml-[9px]">Sepide Zakeri</span></Prop>
          <Prop label="Created:"><span className="ml-[9px]">Jun 8, 2022 8:58 AM</span></Prop>
          <Prop label="Updated:"><span className="ml-[9px]">Jul 8, 2022 3:58 PM</span></Prop>
          <Prop label="State:">
            <FaCheckCircle className="ml-[9px] h-[18.500px] w-[18.500px] text-[#667079]" />
            <span className="ml-[7px]">Saved</span>
          </Prop>
          <Prop label="Seeq Content:">
            <span className={"ml-[8px] " + link}>11 pieces</span>
            <EditIcon className="ml-[3px]" />
          </Prop>
          <Prop label="Time Zone:"><span className={"ml-[8px] " + link}>US/Mountain</span></Prop>
        </div>
        <div className="mt-[26px] h-[111px] w-[417px] rounded-[4px] border border-[#dfdfdf]">
          <div className="flex h-[54px] items-center border-b border-[#dfdfdf] pl-[9px]">
            <Box3D />
            <span className="ml-[9px] w-[333px] text-[16.200px] leading-[24px] text-[#2a2a2a]">Asset Selections</span>
            <FaPlus className="mb-[3px] h-[20px] w-[20px] text-[#2a5c84]" />
          </div>
          <div className={"whitespace-nowrap pl-[10px] pt-[14px] text-[16.270px] leading-[26px] " + link}>Configure an asset selection for Seeq content</div>
        </div>
        <div className="mt-[23px] h-[285px] w-[417px] rounded-[4px] border border-[#dfdfdf]">
          <div className="flex h-[55px] items-center border-b-2 border-[#dfdfdf] pl-[9px]">
            <Calendar />
            <span className="ml-[8px] w-[334px] text-[16.170px] leading-[24px] text-[#2a2a2a]">Date Ranges</span>
            <FaPlus className="mb-[3px] h-[20px] w-[20px] text-[#2a5c84]" />
          </div>
          <div className="flex h-[36px] items-center border-b border-[#dfdfdf] bg-[#f8f8f8] pl-[6px]">
            <CalendarCheck />
            <span className="ml-[5px] w-[320px] text-[16.350px] leading-[24px] text-[#3a3a3a]">Auto-Updating Date Ranges</span>
            <FaStepForward className="h-[22px] w-[15px] text-[#2a5c84]" preserveAspectRatio="none" />
            <FaPlus className="ml-[13px] h-[17px] w-[16px] text-[#2a5c84]" />
          </div>
          <RangeItem className="mt-[8px]" a="Real time - Update twice a day -" b="monitoring the last month of data" c="Jun 7, 2022 10:00 PM - Jul 8, 2022 8:00 AM" />
          <RangeItem className="" a="Real time - Update twice a day -" b="monitoring the last week of data" c="Jul 1, 2022 8:00 AM - Jul 8, 2022 8:00 AM" />
        </div>
        <div className="mt-[23px] h-[93px] w-[417px] rounded-[4px] border border-[#dfdfdf] pl-[10px] pt-[13px]">
          <div className="flex">
            <span className="w-[367px] text-[16.360px] font-medium leading-[26px] text-[#2a2a2a]">Next Scheduled Update</span>
            <EditIcon />
          </div>
          <p className={"mt-[7px] whitespace-nowrap text-[16.270px] leading-[26px] " + link}>July 8, 2022 8:00:00 PM (US/Mountain)</p>
        </div>
        <div className="-ml-[1.500px] mt-[20px] flex h-[42px] w-[420px] items-center rounded-[7px] border-[1.500px] border-[#b9cad8] pl-[9px]">
          <span className="w-[379px] pt-[4px] text-[16.250px] leading-[24px] text-[#38698f]">Recent Version History</span>
          <svg viewBox="0 0 12 17" className="-mt-[4px] h-[17px] w-[12px]" fill="none"><path d="M2 1.500L9.500 8.500 2 15.500" stroke="#2a5c84" strokeWidth="3.200" /></svg>
        </div>
      </div>
    </div>
  );
}

function Gutter({ dir }) {
  return (
    <svg viewBox="0 0 10 10" className="h-[10px] w-[10px] shrink-0" fill="none" stroke="#555" strokeWidth="1.300">
      {dir === "r" ? <path d="M.5 .5L4.500 5 .5 9.500M4.500 .5L8.500 5 4.500 9.500" /> : <path d="M5 .5L1 5 5 9.500M9.500 .5L5.500 5 9.500 9.500" />}
    </svg>
  );
}

/* ---------- document ---------- */

function Callout({ className, children }) {
  return (
    <div className={"absolute flex items-center justify-center border-[3.500px] border-black bg-[#ffc000] text-center font-['Liberation_Sans',sans-serif] text-[55px] font-bold leading-[66px] text-black " + className}>
      {children}
    </div>
  );
}

const line = "block whitespace-nowrap [text-align-last:justify]";

function Document() {
  return (
    <div className="flex min-h-0 flex-1">
      <div className="w-[8px] shrink-0 bg-white" />
      <div className="w-[3px] shrink-0 bg-[#ffd15c]" />
      <div className="flex w-[3429px] shrink-0 flex-col border-l border-[#b5b5b5]">
        <div className="flex h-[31px] shrink-0 border-b border-[#b5b5b5]">
          <div className="w-[1143px] shrink-0 border-r border-[#bcbcbc] bg-[#e6e6e6]" />
          <div className="flex-1 bg-[#999] pl-[551px]"><div className="h-[6px] w-[1181px] border-b border-[#ccc] bg-white" /></div>
        </div>
        <div className="flex h-[92px] shrink-0 items-center bg-[#475577] pl-[8px] pt-[9px] text-[28.900px] font-bold text-white">Real Time Results (Supervised)</div>
        <div className="flex h-[70px] shrink-0 border-b border-[#b5b5b5] bg-[#e6e6e6] text-[21.150px] font-bold leading-[67px] text-[#333]">
          <div className="w-[1143px] shrink-0 border-r border-[#bcbcbc] pl-[8px]">Description</div>
          <div className="pl-[7px]">Results</div>
        </div>
        <div className="flex min-h-0 flex-1">
          <div className="w-[1143px] shrink-0 border-r border-[#bcbcbc] bg-[#e6e6e6] pl-[8px] pt-[787px] text-[21.400px] leading-[29px] text-[#3a3a3a]">
            <p className="w-[1126px]">
              <span className={line}>QSearch main contribution signals are C10 Feed Temp (10T101) and C35 Tank Temp (35T03) were found to be the</span>
              <span className={line}>main contributors (bottom) to the off-spec events over the last day. Real time started on June 14th, 2022.</span>
              <span className={line}>However, as shown in the QSearch real time Status Signal, server was offline from June 19th until June 22nd.</span>
              <span className={line}>Once the server was back online, Qsearch automatically backfilled the data for missing days for continuous</span>
              <span className="block whitespace-nowrap">monitoring <span className="text-[#111]">during the last 1 month, 1 week.</span></span>
            </p>
          </div>
          <div className="flex min-w-0 flex-1 flex-col">
            <div className="h-[861px] shrink-0 border-b border-[#c4c4c4] bg-[#999] pl-[408px] pt-[11px]">
              <div className="w-[1472px] border border-[#d4d4d4]"><MonthChart /></div>
            </div>
            <div className="min-h-0 flex-1 bg-[#e6e6e6] pl-[408px] pt-[12px]">
              <div className="w-[1472px] border border-[#cfcfcf] shadow-[0_0_0_5px_#dfdfdf]"><WeekChart /></div>
            </div>
          </div>
        </div>
      </div>
      <div className="w-[4px] shrink-0 bg-[#ffd15c]" />
      <div className="flex-1 border-r-2 border-[#d5d5d5] bg-white" />
    </div>
  );
}

export default function App() {
  return (
    <div className="relative flex h-[1962px] w-[3960px] flex-col overflow-hidden bg-white font-['Noto_Sans_CJK_SC','Noto_Sans',sans-serif]">
      <div className="flex h-[6px] shrink-0 bg-[#2a5c84]"><div className="w-[55px] bg-[#14355b]" /></div>
      <div className="flex min-h-0 flex-1">
        <div className="flex w-[12px] shrink-0 items-center border-r-2 border-[#a6a6a6] bg-[#e0e0e0] pt-[10px]"><Gutter dir="r" /></div>
        <Sidebar />
        <div className="flex w-[17px] shrink-0 items-center justify-center border-x-2 border-[#a6a6a6] bg-[#e0e0e0] pt-[10px]"><Gutter dir="l" /></div>
        <div className="flex min-w-0 flex-1 flex-col">
          <Toolbar />
          <Document />
        </div>
      </div>
      <Callout className="left-[57px] top-[1002px] h-[369px] w-[364px] pb-[4px]">
        <p>Scheduled<br />to update<br />twice a day<br />at 8 am<br />and 8 pm</p>
      </Callout>
      <Callout className="left-[1681px] top-[525px] h-[104px] w-[364px] pb-px">Last Month</Callout>
      <Callout className="left-[1681px] top-[1200px] h-[104px] w-[364px] pb-px">Last Week</Callout>
      <div className="absolute left-[3732px] top-[1955px] h-[20px] w-[216px] rounded-t-[14px] bg-[#2b3d4f]" />
    </div>
  );
}
